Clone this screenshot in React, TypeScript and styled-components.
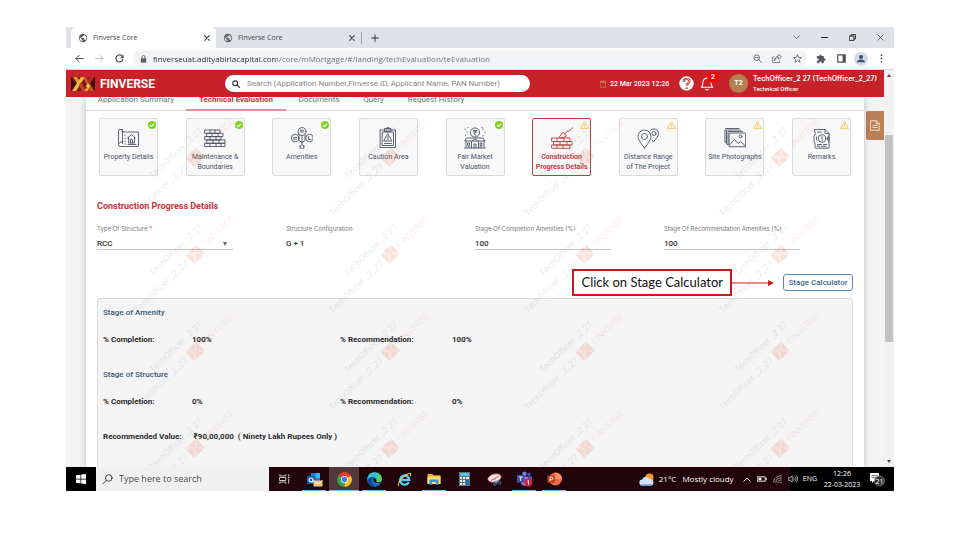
import React from "react";
import styled, { createGlobalStyle } from "styled-components";

const siteFont = `Roboto, "Liberation Sans", sans-serif`;
const uiFont = `"Open Sans", "Noto Sans", sans-serif`;

const GlobalStyle = createGlobalStyle`
  *, *::before, *::after { box-sizing: border-box; }
  body { margin: 0; background: #fff; font-family: ${siteFont}; }
  button, input, select { font: inherit; color: inherit; margin: 0; padding: 0; border: 0; background: none; outline: none; }
  a { color: inherit; text-decoration: none; }
  svg { display: block; flex: none; }
  h2, h3, dl, dd, dt, p { margin: 0; }
`;

/* ---------- window ---------- */

const Slide = styled.main`
  display: flex;
  min-height: 100vh;
  padding: 27px 66px 49px;
`;
const Screen = styled.div`
  display: flex;
  flex-direction: column;
  flex: 1;
  min-width: 0;
`;
const IconButton = styled.button<{ $w?: number }>`
  display: flex;
  align-items: center;
  justify-content: center;
  width: ${(p) => p.$w ?? 20}px;
  height: 16px;
  flex: none;
`;
const TabStrip = styled.div`
  display: flex;
  align-items: flex-end;
  height: 21px;
  padding-left: 5px;
  background: #dee1e6;
  font: 7px/20px ${uiFont};
  color: #45494d;
`;
const BrowserTab = styled.div<{ $active?: boolean }>`
  display: flex;
  align-items: center;
  gap: 5px;
  width: 145px;
  height: 21px;
  padding: 0 3px 0 7px;
  border-radius: 5px 5px 0 0;
  background: ${(p) => (p.$active ? "#fff" : "transparent")};
`;
const TabTitle = styled.span`
  flex: 1;
  white-space: nowrap;
`;
const NewTab = styled.div`
  display: flex;
  align-items: center;
  height: 21px;
  &::before { content: ""; width: 1px; height: 12px; background: #9a9fa5; }
`;
const WindowButtons = styled.div`
  display: flex;
  gap: 8px;
  height: 19px;
  margin-left: auto;
  padding-right: 4px;
`;
const Toolbar = styled.div`
  display: flex;
  align-items: center;
  height: 22px;
  padding: 0 3px;
  border-bottom: 1px solid #d5d7da;
  background: #fff;
`;
const AddressBar = styled.div`
  display: flex;
  align-items: center;
  flex: 1;
  height: 17px;
  margin: 0 4px;
  padding-left: 7px;
  border-radius: 9px;
  background: #f1f3f4;
`;
const AddressInput = styled.input`
  flex: 1;
  min-width: 0;
  margin-left: 6px;
  font: 8px/16px ${uiFont};
  color: transparent;
  background: linear-gradient(90deg, #26292c 124px, #6b6f74 124px);
  background-clip: text;
  -webkit-background-clip: text;
`;

/* ---------- site ---------- */

const PageArea = styled.div`
  display: flex;
  flex: 1;
`;
const Site = styled.div`
  display: flex;
  flex-direction: column;
  flex: 1;
  min-width: 0;
`;
const SiteHeader = styled.header`
  display: flex;
  align-items: center;
  height: 27px;
  padding: 0 5px;
  background: #c7222a;
  color: #fff;
`;
const Brand = styled.a`
  display: flex;
  align-items: center;
  gap: 5px;
  width: 154px;
  font: 700 12px/16px ${siteFont};
`;
const SearchBox = styled.label`
  display: flex;
  align-items: center;
  gap: 7px;
  flex: 0 1 305px;
  height: 17px;
  padding: 0 7px;
  border-radius: 9px;
  background: #fff;
  input {
    flex: 1;
    min-width: 0;
    font-size: 8px;
    line-height: 16px;
    color: #555;
  }
  input::placeholder { color: #858585; opacity: 1; }
`;
const HeaderTools = styled.div`
  display: flex;
  align-items: center;
  margin-left: auto;
`;
const DateText = styled.time`
  width: 69px;
  margin-left: 4px;
  font: 500 7px/10px ${siteFont};
  white-space: nowrap;
`;
const HelpButton = styled(IconButton)`
  width: 15px;
`;
const BellButton = styled.button`
  position: relative;
  width: 18px;
  margin: 0 11px 0 6px;
  display: flex;
`;
const Badge = styled.span`
  position: absolute;
  top: -5px;
  right: -1px;
  width: 12px;
  height: 12px;
  border-radius: 50%;
  background: #f00;
  font: 700 7px/12px ${siteFont};
  text-align: center;
`;
const Avatar = styled.span`
  width: 19px;
  height: 19px;
  border-radius: 50%;
  background: #b5804f;
  font: 700 7px/19px ${siteFont};
  text-align: center;
`;
const UserBlock = styled.div`
  width: 126px;
  margin-left: 5px;
  font: 600 7px/10px Inter, ${siteFont};
  white-space: nowrap;
  small { display: block; font: 500 6px/10px ${siteFont}; }
`;
const Body = styled.div`
  position: relative;
  display: flex;
  flex: 1;
  background: #f4f4f4;
  padding-left: 20px;
`;
const Sheet = styled.section`
  display: flex;
  flex-direction: column;
  flex: 1;
  min-width: 0;
  background: #fff;
  box-shadow: 0 0 7px rgba(0, 0, 0, 0.22);
  clip-path: inset(0 -8px);
`;
const SideRail = styled.aside`
  display: flex;
  width: 20px;
  padding: 14px 0 0 2px;
`;
const NotesTab = styled.button`
  display: flex;
  align-items: center;
  justify-content: center;
  width: 18px;
  height: 29px;
  border-radius: 2px 0 0 2px;
  background: #bb8059;
`;
const Nav = styled.nav`
  display: flex;
  border-bottom: 1px solid #dcdcdc;
`;
const NavLink = styled.a<{ $active?: boolean; $w: number }>`
  width: ${(p) => p.$w}px;
  padding-bottom: 7px;
  border-bottom: 2px solid ${(p) => (p.$active ? "#e29297" : "transparent")};
  margin-bottom: -1px;
  font: ${(p) => (p.$active ? 700 : 400)} 8px/5px ${siteFont};
  color: ${(p) => (p.$active ? "#c8323a" : "#707070")};
  text-align: center;
  white-space: nowrap;
`;
const Content = styled.div`
  display: flex;
  flex-direction: column;
  flex: 1;
  padding: 7px 11px 0;
`;
const Cards = styled.div`
  display: flex;
  justify-content: space-between;
  padding: 0 2px;
`;
const Card = styled.button<{ $active?: boolean }>`
  position: relative;
  display: flex;
  flex-direction: column;
  align-items: center;
  width: 59px;
  height: 58px;
  padding-top: 8px;
  border: 1px solid ${(p) => (p.$active ? "#b5413c" : "#dadada")};
  border-radius: 2px;
  background: #f8f8f8;
  color: ${(p) => (p.$active ? "#b8423c" : "#4b5368")};
  font: ${(p) => (p.$active ? 700 : 400)} 7px/10px ${siteFont};
  white-space: pre;
  svg + span { margin-top: 3px; }
`;
const Status = styled.span`
  position: absolute;
  top: 2px;
  right: 1px;
`;
const SectionTitle = styled.h2`
  margin-top: 24px;
  font: 700 9px/12px ${siteFont};
  color: #c8323a;
`;
const Fields = styled.form`
  display: grid;
  grid-template-columns: repeat(4, 1fr);
  margin-top: 12px;
`;
const Field = styled.label<{ $line?: boolean }>`
  position: relative;
  display: flex;
  flex-direction: column;
  width: 136px;
  font: 400 6px/10px Inter, ${siteFont};
  color: #777;
  white-space: nowrap;
  em { color: #d33; font-style: normal; }
  input, select {
    appearance: none;
    height: 16px;
    padding-top: 4px;
    border-bottom: 1px solid ${(p) => (p.$line ? "#c4c4c4" : "transparent")};
    font: 500 8px/10px ${siteFont};
    color: #333;
  }
`;
const Caret = styled.span`
  position: absolute;
  right: 6px;
  bottom: 4px;
  border: 2px solid transparent;
  border-top: 4px solid #666;
  border-bottom: 0;
`;
const Actions = styled.div`
  position: relative;
  z-index: 2;
  display: flex;
  align-items: center;
  justify-content: flex-end;
  margin-top: 19px;
`;
const Callout = styled.p`
  padding: 0 7px;
  border: 2px solid #c61a1f;
  background: #fff;
  font: 400 13px/23px Lato, sans-serif;
  color: #111;
  white-space: nowrap;
`;
const StageButton = styled.button`
  width: 70px;
  height: 17px;
  margin-left: 9px;
  border: 1px solid #5b87b5;
  border-radius: 3px;
  background: #fff;
  font: 500 8px/14px ${siteFont};
  color: #41658f;
  white-space: nowrap;
`;
const Summary = styled.section`
  flex: 1;
  margin-top: 2px;
  padding: 8px 5px 12px;
  border: 1px solid #dcdcdc;
  border-bottom: 0;
  border-radius: 3px 3px 0 0;
  background: #f4f4f4;
  color: #2b2b2b;
`;
const SummaryTitle = styled.h3`
  font: 500 8px/12px ${siteFont};
  color: #34567a;
`;
const Row = styled.dl`
  display: grid;
  grid-template-columns: 89px 148px 112px 1fr;
  margin: 15px 0 23px;
  font: 700 8px/12px ${siteFont};
`;
const ValueRow = styled.dl`
  display: flex;
  gap: 12px;
  margin-top: 23px;
  font: 700 8px/12px ${siteFont};
  white-space: pre;
`;

/* ---------- watermark ---------- */

const Watermarks = styled.div`
  position: absolute;
  inset: 0;
  display: grid;
  grid-template-columns: repeat(4, 195px);
  grid-auto-rows: 97px;
  padding: 91px 0 0 75px;
  overflow: hidden;
  pointer-events: none;
`;
const Mark = styled.div`
  width: max-content;
  height: 32px;
  transform: rotate(-44deg);
  transform-origin: left bottom;
  font: 400 9px/16px ${siteFont};
  color: rgba(80, 110, 170, 0.16);
  white-space: nowrap;
  p:first-child { padding-left: 37px; }
  p:last-child { display: flex; align-items: center; gap: 4px; }
  b { font-weight: 400; color: rgba(220, 70, 50, 0.11); }
`;

/* ---------- scrollbar ---------- */

const ScrollTrack = styled.div`
  display: flex;
  flex-direction: column;
  align-items: center;
  width: 10px;
  padding: 4px 0;
  background: #f1f1f1;
`;
const Thumb = styled.div`
  width: 8px;
  height: 207px;
  margin: 58px 0 auto;
  background: #c1c1c1;
`;
const Arrow = styled.span<{ $up?: boolean }>`
  border: 2px solid transparent;
  border-top: ${(p) => (p.$up ? "0" : "3px solid #505050")};
  border-bottom: ${(p) => (p.$up ? "3px solid #505050" : "0")};
`;

/* ---------- taskbar ---------- */

const Taskbar = styled.footer`
  display: flex;
  height: 24px;
  background: linear-gradient(270deg, #000 104px, #22050a 104px);
  color: #fff;
  font: 8px/12px ${uiFont};
`;
const StartButton = styled.button`
  display: flex;
  align-items: center;
  justify-content: center;
  width: 30px;
  background: #000;
`;
const TaskSearch = styled.label`
  display: flex;
  align-items: center;
  gap: 6px;
  width: 173px;
  padding-left: 6px;
  background: #f0f0f0;
  input { flex: 1; min-width: 0; font: 9px/16px ${uiFont}; }
  input::placeholder { color: #4a4a4a; opacity: 1; }
`;
const AppButton = styled.button<{ $open?: boolean; $active?: boolean }>`
  display: flex;
  align-items: center;
  justify-content: center;
  width: 30px;
  background: ${(p) => (p.$active ? "#52383d" : "none")};
  box-shadow: ${(p) => (p.$active ? "inset 0 -1px #7cb8ea" : "none")};
  ${(p) => p.$open && `
    background: linear-gradient(#7cb8ea, #7cb8ea) center bottom / 24px 1px no-repeat;
  `}
`;
const Tray = styled.div`
  display: flex;
  align-items: center;
  margin-left: auto;
  padding-right: 9px;
  white-space: nowrap;
`;
const Weather = styled.span`
  display: flex;
  gap: 6px;
  width: 84px;
  margin-left: 5px;
  font-size: 8px;
`;
const TrayIcons = styled.div`
  display: flex;
  align-items: center;
  gap: 6px;
  width: 60px;
`;
const Clock = styled.time`
  width: 50px;
  font: 7px/11px ${uiFont};
  text-align: center;
  white-space: pre-line;
`;
const Language = styled.span`
  font-size: 7px;
`;
const Notices = styled.button`
  margin-left: 2px;
`;

/* ---------- drawings ---------- */

const Line = (p: React.SVGProps<SVGSVGElement>) => (
  <svg fill="none" stroke="currentColor" strokeWidth="1" strokeLinecap="round" strokeLinejoin="round" aria-hidden="true" {...p} />
);

const Globe = () => (
  <svg width="10" height="10" viewBox="0 0 24 24" aria-hidden="true">
    <path fill="#5a5f64" d="M12 2a10 10 0 1 0 0 20 10 10 0 0 0 0-20zm-1 17.9A8 8 0 0 1 4.200 10.200L9 15v1c0 1.100.9 2 2 2zm6.900-2.500A2 2 0 0 0 16 16h-1v-3a1 1 0 0 0-1-1H8v-2h2a1 1 0 0 0 1-1V7h2a2 2 0 0 0 2-2v-.4a8 8 0 0 1 2.900 12.800z" />
  </svg>
);
const Cross = ({ size = 6, w = 1 }: { size?: number; w?: number }) => (
  <Line width={size} height={size} viewBox="0 0 6 6" stroke="#44484c" strokeWidth={w}><path d="M.7.7l4.600 4.600M5.300.7L.7 5.300" /></Line>
);

const Logo = () => (
  <svg width="24" height="14" viewBox="0 0 24 14" aria-hidden="true">
    <path fill="#7c1a1c" d="M0 0h24v14H0z" />
    <path fill="#3f1012" d="M0 0l5 7-5 7zM24 0l-5 7 5 7z" />
    <path fill="#e5942f" d="M2 0h4l4 6-2 3z" />
    <path fill="#f2bd45" d="M10 0h4L5 14H1z" />
    <path fill="#c93c20" d="M8 8l2-3 5 9h-4z" />
    <path fill="#d9581f" d="M12 0h3l8 14h-4z" />
    <path fill="#f5cd55" d="M15 9l2-3 2 3-2 3z" />
    <path fill="#b62a20" d="M19 0h4l-5 7-2-3z" />
    <path fill="#e8a33a" d="M16 10l2 2-1 2h-4z" />
  </svg>
);

const MarkLogo = () => (
  <svg width="15" height="13" viewBox="0 0 15 13" aria-hidden="true">
    <path fill="rgba(225,90,50,.11)" d="M0 0h15v13H0z" />
    <path fill="rgba(225,80,40,.08)" d="M0 0l5 6-5 7zM5 0l3 6 4-6zM4 13l4-7 4 7zM15 1l-5 5 5 6z" />
  </svg>
);

const Tick = () => (
  <svg width="8" height="8" viewBox="0 0 8 8" aria-hidden="true">
    <circle cx="4" cy="4" r="4" fill="#7ed321" />
    <path d="M2.100 4.100l1.400 1.400 2.500-2.700" fill="none" stroke="#fff" strokeWidth="1.100" />
  </svg>
);
const Warn = () => (
  <svg width="9" height="8" viewBox="0 0 9 8" fill="none" stroke="#f9c14a" strokeWidth=".9" strokeLinejoin="round" aria-hidden="true">
    <path d="M4.500.8L8.400 7.400H.6zM4.500 3v2.200M4.500 5.800v.8" />
  </svg>
);

const cardIcons: Record<string, React.ReactNode> = {
  property: (
    <>
      <path d="M4 2.500h-2a1.500 1.500 0 0 0-1.500 1.500v13.500a2 2 0 0 0 2 2H20a.5.5 0 0 0 .5-.5V5H4.500zM4.500 3v13.500a1.500 1.500 0 0 0-3-.3" />
      <path d="M9.500 11l4-3.500 4 3.500M10.500 10.500V16h6v-5.500M12.500 16v-3.500h2V16M7 8v.5M7 11v.5M7 14v.5M7 17h.5M10 17.500h8" />
    </>
  ),
  wall: (
    <path d="M1 3h15v3.300H1zM6 3v3.300M11 3v3.300M3 6.300h16v3.300H3zM8 6.300v3.300M14 6.300v3.300M1 9.600h16v3.300H1zM6 9.600v3.300M12 9.600v3.300M3 12.900h18v3.400H3zM9 12.900v3.400M15 12.900v3.400M1 16.300h20v3.200H1zM6 16.300v3.200M12 16.300v3.200M17 16.300v3.200" />
  ),
  amenities: (
    <>
      <circle cx="11" cy="4.500" r="4" /><circle cx="4" cy="11" r="3.700" /><circle cx="18.500" cy="11" r="3.700" />
      <path d="M11 8.500V17M8 7.500v6l3 2 3-2v-6M9.300 5h3.400M9.300 3.300h3.400M2.500 10.500h3M2.500 12.200h3M17.500 9.500v3h2.500M8.500 19.500l2.500-2 2.500 2M9.300 19.300V22h3.400v-2.700" />
    </>
  ),
  caution: (
    <>
      <path d="M3.500 3h15v17.500h-15zM5.500 5h11v13.500h-11zM8 1.500h6v3H8zM10 .7h2" />
      <path d="M11 7l4 7H7zM11 9.500v2M11 12.700v.3M7.500 16.500h7" />
    </>
  ),
  market: (
    <>
      <circle cx="11" cy="5.500" r="4.600" />
      <path d="M9.300 3.500h3.400M9.300 5h3.400M10 3.500c2.500 0 2.500 3 0 3l2 2M1 2v.4M3 5v.4M1.500 8v.4M19 2v.4M21 5v.4M19 8.500v.4M4 .5v.3M18 .5v.3" />
      <path d="M3 11h16l2 3H1zM2 14v6.500M20 14v6.500M.5 21h21M7.500 21v-6.500L11 12l3.500 2.500V21M10 21v-4h2v4M4 16h1.500v2.500H4zM16.500 16H18v2.500h-1.500zM4 20h2M16 20h2" />
    </>
  ),
  construction: (
    <>
      <path d="M1 11h18v3.500H1zM6 11v3.500M13 11v3.500M3 14.500h18V18H3zM9 14.500V18M16 14.500V18M1 18h18v3.300H1zM6 18v3.300M12 18v3.300" />
      <path d="M8 10.500l4-5.500 3.500 4-3 1.500zM13.500 7l3-3M16.500 4l1 .5L21.500.8" />
    </>
  ),
  distance: (
    <>
      <path d="M7.500 21C3 15 1 12.500 1 9.500a6.500 6.500 0 0 1 13 0c0 3-2 5.500-6.500 11.500z" /><circle cx="7.500" cy="9.500" r="3" />
      <path d="M13 4a4.600 4.600 0 0 1 8.500 2.500c0 2.500-2 4.500-5 8.500l-1.500-2" /><circle cx="17" cy="6.500" r="2" />
    </>
  ),
  photos: (
    <>
      <path d="M5.500 6h15.500a.7.700 0 0 1 .7.700v13H5.500zM4 17.500V4.500h14.500M2.500 16V3h14M1 14.500V2.500a1 1 0 0 1 1-1h13M4 17.500H3L1 14.500" />
      <path d="M6 17.500l4.500-5 3.500 4 2.500-2 4.500 4" /><circle cx="16.500" cy="9.500" r="1.500" />
    </>
  ),
  remarks: (
    <>
      <path d="M4 2.500h10l4 4V20.500a.7.700 0 0 1-.7.700H4.700A.7.700 0 0 1 4 20.500V16l-1-1V9l1-1zM14 2.500v4h4M18 9v6" />
      <circle cx="11" cy="11.500" r="3.800" /><path d="M11 9.500v2.200M11 13.200v.3M6.500 5h4M6.500 17.500h4M12.500 17.500h3M6.500 19.300h2M10 19.300h5M5.500 10v3M16.500 10v3" />
    </>
  ),
};

/* ---------- data ---------- */

const cards = [
  { icon: "property", text: "Property Details", status: "done" },
  { icon: "wall", text: "Maintenance &\nBoundaries", status: "done" },
  { icon: "amenities", text: "Amenities", status: "done" },
  { icon: "caution", text: "Caution Area", status: "none" },
  { icon: "market", text: "Fair Market\nValuation", status: "done" },
  { icon: "construction", text: "Construction\nProgress Details", status: "warn", active: true },
  { icon: "distance", text: "Distance Range\nof The Project", status: "warn" },
  { icon: "photos", text: "Site Photographs", status: "warn" },
  { icon: "remarks", text: "Remarks", status: "warn" },
];

const navItems = [
  { text: "Application Summary", w: 100 },
  { text: "Technical Evaluation", w: 100, active: true },
  { text: "Documents", w: 66 },
  { text: "Query", w: 43 },
  { text: "Request History", w: 82 },
];

const stages = [
  { title: "Stage of Amenity", value: "100%" },
  { title: "Stage of Structure", value: "0%" },
];

/* ---------- parts ---------- */

function Browser() {
  return (
    <>
      <TabStrip>
        <BrowserTab $active>
          <Globe /><TabTitle>Finverse Core</TabTitle>
          <IconButton $w={12} aria-label="Close tab"><Cross w={1.2} /></IconButton>
        </BrowserTab>
        <BrowserTab>
          <Globe /><TabTitle>Finverse Core</TabTitle>
          <IconButton $w={12} aria-label="Close tab"><Cross w={1.2} /></IconButton>
        </BrowserTab>
        <NewTab>
          <IconButton $w={26} aria-label="New tab">
            <Line width="8" height="8" viewBox="0 0 8 8" stroke="#33373b"><path d="M4 .7v6.600M.7 4h6.600" /></Line>
          </IconButton>
        </NewTab>
        <WindowButtons>
          <IconButton aria-label="Search tabs"><Line width="7" height="5" viewBox="0 0 7 5" stroke="#555" strokeWidth=".8"><path d="M.7.8l2.800 2.800L6.300.8" /></Line></IconButton>
          <IconButton aria-label="Minimise"><Line width="7" height="3" viewBox="0 0 7 3" stroke="#222"><path d="M.5 1.500h6" /></Line></IconButton>
          <IconButton aria-label="Restore"><Line width="7" height="7" viewBox="0 0 7 7" stroke="#222" strokeWidth=".9"><path d="M.6 2h4.400v4.400H.6zM2 2V.6h4.400V5H5" /></Line></IconButton>
          <IconButton aria-label="Close window"><Cross size={7} w={0.7} /></IconButton>
        </WindowButtons>
      </TabStrip>
      <Toolbar>
        <IconButton aria-label="Back"><Line width="9" height="9" viewBox="0 0 9 9" stroke="#4d5256"><path d="M8.300 4.500H1M4.200 1.200L.9 4.500l3.300 3.300" /></Line></IconButton>
        <IconButton aria-label="Forward"><Line width="9" height="9" viewBox="0 0 9 9" stroke="#b5b8bc"><path d="M.7 4.500H8M4.800 1.200l3.300 3.300-3.300 3.300" /></Line></IconButton>
        <IconButton aria-label="Reload">
          <Line width="9" height="9" viewBox="0 0 9 9" stroke="#4d5256" strokeWidth="1.200"><path d="M7.800 5.300A3.500 3.500 0 1 1 7.100 2.200" /><path fill="#4d5256" stroke="none" d="M8.600.4v3.800H4.800z" /></Line>
        </IconButton>
        <AddressBar>
          <svg width="7" height="8" viewBox="0 0 7 8" aria-hidden="true"><path fill="#5f6368" d="M.8 3.200h5.400v4.500H.8z" /><path fill="none" stroke="#5f6368" strokeWidth=".9" d="M2 3.200V2a1.500 1.500 0 0 1 3 0v1.200" /></svg>
          <AddressInput aria-label="Address" defaultValue="finverseuat.adityabirlacapital.com/core/mMortgage/#/landing/techEvaluation/teEvaluation" />
          <IconButton aria-label="Zoom"><Line width="9" height="9" viewBox="0 0 9 9" stroke="#5f6368" strokeWidth=".9"><circle cx="3.700" cy="3.700" r="2.800" /><path d="M5.900 5.900l2.500 2.500M2.400 3.700H5" /></Line></IconButton>
          <IconButton aria-label="Share"><Line width="10" height="9" viewBox="0 0 10 9" stroke="#5f6368" strokeWidth=".8"><path d="M2 3H.7v5.500h7V6.800M2.700 6.500c.2-2 1.500-3 3.800-3.200V5.200L9.400 2.700 6.500.6v1.500C4 2.400 2.600 4 2.700 6.500z" /></Line></IconButton>
          <IconButton aria-label="Bookmark"><Line width="9" height="9" viewBox="0 0 24 24" stroke="#5f6368" strokeWidth="2.200"><path d="M12 2l3 7 7.500.6-5.700 5 1.700 7.400-6.500-4-6.500 4 1.700-7.400-5.700-5L9 9z" /></Line></IconButton>
        </AddressBar>
        <IconButton aria-label="Extensions"><svg width="10" height="10" viewBox="0 0 24 24"><path fill="#55595d" d="M20.500 11H19V7a2 2 0 0 0-2-2h-4V3.500a2.500 2.500 0 0 0-5 0V5H4a2 2 0 0 0-2 2v3.800h1.500a2.700 2.700 0 0 1 0 5.400H2V20c0 1.100.9 2 2 2h3.800v-1.500a2.700 2.700 0 0 1 5.400 0V22H17a2 2 0 0 0 2-2v-4h1.500a2.500 2.500 0 0 0 0-5z" /></svg></IconButton>
        <IconButton aria-label="Side panel"><svg width="9" height="9" viewBox="0 0 9 9"><path fill="none" stroke="#4d5256" strokeWidth="1.200" d="M.8.8h7.400v7.400H.8z" /><path fill="#4d5256" d="M5.500 1H8v7H5.500z" /></svg></IconButton>
        <IconButton aria-label="Profile"><svg width="14" height="14" viewBox="0 0 14 14"><circle cx="7" cy="7" r="7" fill="#d3daea" /><circle cx="7" cy="5" r="2" fill="#3f4e6b" /><path fill="#3f4e6b" d="M3 10.300c0-3.700 8-3.700 8 0z" /></svg></IconButton>
        <IconButton aria-label="Menu"><svg width="3" height="9" viewBox="0 0 3 9" fill="#4d5256"><circle cx="1.500" cy="1.200" r=".9" /><circle cx="1.500" cy="4.500" r=".9" /><circle cx="1.500" cy="7.800" r=".9" /></svg></IconButton>
      </Toolbar>
    </>
  );
}

function Header() {
  return (
    <SiteHeader>
      <Brand href="#"><Logo />FINVERSE</Brand>
      <SearchBox>
        <Line width="8" height="8" viewBox="0 0 8 8" stroke="#333" strokeWidth="1.200"><circle cx="3.200" cy="3.200" r="2.400" /><path d="M5 5l2.400 2.400" /></Line>
        <input aria-label="Search" placeholder="Search (Application Number,Finverse ID, Applicant Name, PAN Number)" />
      </SearchBox>
      <HeaderTools>
        <Line width="6" height="8" viewBox="0 0 6 8" stroke="#c98246" strokeWidth=".8"><path d="M.5 1.500h5v5.800h-5zM.5 2.700h5M1.700.6v1M4.300.6v1" /></Line>
        <DateText>22 Mar 2023 12:26</DateText>
        <HelpButton aria-label="Help">
          <svg width="15" height="15" viewBox="0 0 15 15"><circle cx="7.500" cy="7.500" r="7.200" fill="#fff" /><path d="M4.700 6c0-4.200 6-4 5.600-.4C10 7.700 7.600 7.700 7.600 9.800M7.600 11.400v1.300" fill="none" stroke="#c7222a" strokeWidth="2.200" /><path d="M4.700 6c0-4.200 6-4 5.600-.4C10 7.700 7.600 7.700 7.600 9.800" fill="none" stroke="#fff" strokeWidth=".7" /></svg>
        </HelpButton>
        <BellButton aria-label="Notifications">
          <Line width="14" height="15" viewBox="0 0 12 13" stroke="#fff" strokeWidth=".9"><path d="M1 9.800c1.500-1 1.500-2.300 1.500-4.300a3.500 3.500 0 0 1 7 0c0 2 0 3.300 1.500 4.300zM4.800 11.500c.5.800 1.900.8 2.400 0M6 2V.8" /></Line>
          <Badge>2</Badge>
        </BellButton>
        <Avatar>T2</Avatar>
        <UserBlock>TechOfficer_2 27 (TechOfficer_2_27)<small>Technical Officer</small></UserBlock>
      </HeaderTools>
    </SiteHeader>
  );
}

function Evaluation() {
  return (
    <Body>
      <Sheet>
        <Nav>
          {navItems.map((n) => <NavLink key={n.text} href="#" $w={n.w} $active={n.active}>{n.text}</NavLink>)}
        </Nav>
        <Content>
          <Cards>
            {cards.map((c) => (
              <Card key={c.icon} $active={c.active}>
                <Line width="22" height="22" viewBox="0 0 22 22" strokeWidth=".9">{cardIcons[c.icon]}</Line>
                <span>{c.text}</span>
                {c.status !== "none" && <Status>{c.status === "done" ? <Tick /> : <Warn />}</Status>}
              </Card>
            ))}
          </Cards>
          <SectionTitle>Construction Progress Details</SectionTitle>
          <Fields>
            <Field $line>
              <span>Type Of Structure <em>*</em></span>
              <select defaultValue="RCC"><option>RCC</option></select>
              <Caret />
            </Field>
            <Field>Structure Configuration<input readOnly value="G + 1" /></Field>
            <Field $line>Stage Of Completion Amenities (%)<input defaultValue="100" /></Field>
            <Field $line>Stage Of Recommendation Amenities (%)<input defaultValue="100" /></Field>
          </Fields>
          <Actions>
            <Callout>Click on Stage Calculator</Callout>
            <svg width="42" height="6" viewBox="0 0 42 6" aria-hidden="true"><path d="M0 3h37" stroke="#c61a1f" /><path d="M36 0l6 3-6 3z" fill="#c61a1f" /></svg>
            <StageButton>Stage Calculator</StageButton>
          </Actions>
          <Summary>
            {stages.map((s) => (
              <React.Fragment key={s.title}>
                <SummaryTitle>{s.title}</SummaryTitle>
                <Row>
                  <dt>% Completion:</dt><dd>{s.value}</dd>
                  <dt>% Recommendation:</dt><dd>{s.value}</dd>
                </Row>
              </React.Fragment>
            ))}
            <ValueRow><dt>Recommended Value:</dt><dd>{"₹90,00,000  ( Ninety Lakh Rupees Only )"}</dd></ValueRow>
          </Summary>
        </Content>
      </Sheet>
      <SideRail>
        <NotesTab aria-label="Notes">
          <Line width="10" height="11" viewBox="0 0 10 11" stroke="#f5e6da" strokeWidth=".9"><path d="M.8.8h5.700l2.700 2.500v6.900H.8zM6.300.8v2.700h2.800M2.800 5.500h4.400M2.800 7.500h4.400" /></Line>
        </NotesTab>
      </SideRail>
      <Watermarks aria-hidden="true">
        {Array.from({ length: 16 }, (_, i) => (
          <div key={i}>
            <Mark>
              <p>TechOfficer _2 27</p>
              <p>TechOfficer _2_27<MarkLogo /><b>FINVERSE</b></p>
            </Mark>
          </div>
        ))}
      </Watermarks>
    </Body>
  );
}

function WindowsTaskbar() {
  return (
    <Taskbar>
      <StartButton aria-label="Start"><svg width="10" height="10" viewBox="0 0 10 10" fill="#fff"><path d="M0 1.300L4.500.7v4H0zM5.200.6L10 0v4.700H5.200zM0 5.400h4.500v4L0 8.800zM5.200 5.400H10V10l-4.800-.6z" /></svg></StartButton>
      <TaskSearch>
        <Line width="11" height="11" viewBox="0 0 11 11" stroke="#333" strokeWidth=".9"><circle cx="6.800" cy="4" r="3.300" /><path d="M4.300 6.400L.8 9.900" /></Line>
        <input aria-label="Taskbar search" placeholder="Type here to search" />
      </TaskSearch>
      <AppButton aria-label="Task view"><Line width="11" height="10" viewBox="0 0 11 10" stroke="#ddd" strokeWidth=".9"><path d="M.8.7v1.200h6V.7M.8 9.300V8.100h6v1.200M.8 3.500h6v3h-6zM9.700.7v1.500M9.700 5v4.300M9.200 3.500h1" /></Line></AppButton>
      <AppButton $open aria-label="Outlook">
        <svg width="17" height="15" viewBox="0 0 17 15"><path fill="#1a78cf" d="M5 1h9v10H5z" /><path fill="#35b8f1" d="M9.500 1H14v5H9.500z" /><path fill="#0b5cad" d="M1 4h8v8H1z" /><circle cx="5" cy="8" r="2" fill="none" stroke="#fff" strokeWidth="1.200" /><path fill="#f6c27a" d="M7.500 8.500H16.500V14.500H7.500z" /><path d="M7.500 8.500l4.500 3.300 4.500-3.300" fill="none" stroke="#fff" strokeWidth=".8" /></svg>
      </AppButton>
      <AppButton $active aria-label="Chrome">
        <svg width="15" height="15" viewBox="0 0 15 15"><path fill="#e63b2e" d="M7.500 7.500L1.200 3.700a7.300 7.300 0 0 1 12.600 0z" /><path fill="#fbc116" d="M7.500 7.500l6.300-3.800a7.300 7.300 0 0 1-6.500 11.100z" /><path fill="#2da94f" d="M7.500 7.500l-.2 7.300A7.300 7.300 0 0 1 1.200 3.700z" /><circle cx="7.500" cy="7.500" r="3.500" fill="#fff" /><circle cx="7.500" cy="7.500" r="2.700" fill="#3b7ded" /></svg>
      </AppButton>
      <AppButton $open aria-label="Edge">
        <svg width="15" height="15" viewBox="0 0 15 15"><circle cx="7.500" cy="7.500" r="7.300" fill="#1476c8" /><path fill="#35c1d8" d="M.5 6A7.300 7.300 0 0 1 7.500.2c4.500 0 7.300 3.300 7.300 6.500 0 2-1.500 3.300-3.500 3.300-1.800 0-2.500-.6-2-1.400C10 7 9 5 6.500 5 4 5 2 5.500.5 8z" /><path fill="#63d34c" d="M10 .7a7.200 7.200 0 0 1 4.800 6c0 2-1.500 3.300-3.500 3.300-1.800 0-2.500-.6-2-1.400C11 6 11 3 10 .7z" /><path fill="#0c4a96" d="M6.500 5C3.500 7 4 12.500 9 14.700 5 15 1 12 .5 8 2 5.500 4 5 6.500 5z" /><path fill="#22050a" d="M6.500 6.300c-1 3 1.500 5.200 6.300 4.700l1.200-.7c-2.700.4-5 0-4.700-1.700C9.500 7.500 8 6 6.500 6.300z" /></svg>
      </AppButton>
      <AppButton aria-label="Internet Explorer">
        <svg width="15" height="15" viewBox="0 0 15 15" fill="none"><path d="M11.800 10.200A4.600 4.600 0 1 1 12.300 8H4.500" stroke="#5cc8f5" strokeWidth="2.300" /><path d="M2 13.800c-2-1 1-6 4.500-9S13.300.4 13.700 1.800c.2.700 0 1.500-.6 2.500" stroke="#f6c63c" strokeWidth="1.100" /></svg>
      </AppButton>
      <AppButton $open aria-label="File Explorer">
        <svg width="14" height="12" viewBox="0 0 14 12"><path fill="#e9ab2d" d="M.5 1h5l1 1.200h7V11H.5z" /><path fill="#fbdc74" d="M.5 3.500h13V11H.5z" /><path fill="#3d94dc" d="M2.500 11.800V7.500c0-.5.400-1 1-1h7c.6 0 1 .5 1 1v4.300H9V9H5v2.800z" /></svg>
      </AppButton>
      <AppButton aria-label="Calculator">
        <svg width="11" height="14" viewBox="0 0 11 14"><path fill="#68737c" d="M0 0h11v14H0z" /><path fill="#4fc3f0" d="M1 1h9v3H1z" /><path fill="#e6ebef" d="M1 5h2v2H1zM4 5h2v2H4zM7 5h3v2H7zM1 8h2v2H1zM4 8h2v2H4zM1 11h2v2H1zM4 11h2v2H4z" /><path fill="#1b6fb8" d="M7 8h3v5H7z" /></svg>
      </AppButton>
      <AppButton aria-label="Snipping Tool">
        <svg width="15" height="13" viewBox="0 0 15 13"><ellipse cx="7.500" cy="5" rx="6.700" ry="3.900" fill="#f4eeee" stroke="#c9555a" strokeWidth=".8" transform="rotate(-15 7.500 5)" /><path d="M4 7.500L12 3" stroke="#d04a50" strokeWidth="1" /><path d="M8 6l2.500 4M12 6.500L8.500 10" stroke="#9ab" strokeWidth=".9" /><circle cx="8" cy="11" r="1.300" fill="none" stroke="#2a8bd0" strokeWidth=".9" /><circle cx="12.500" cy="9.500" r="1.300" fill="none" stroke="#2a8bd0" strokeWidth=".9" /></svg>
      </AppButton>
      <AppButton $open aria-label="Teams">
        <svg width="17" height="16" viewBox="0 0 17 16"><circle cx="8.500" cy="2.700" r="2.200" fill="#7b83eb" /><circle cx="13" cy="3.300" r="1.600" fill="#5059c9" /><path fill="#7b83eb" d="M5 5.500h7.500V11a3.700 3.700 0 0 1-7.500 0z" /><path fill="#5059c9" d="M12.500 5.500H16V10a2.500 2.500 0 0 1-3.500 1z" /><path fill="#4048a8" d="M1 4h7.500v7.500H1z" /><path d="M2.800 6h4M4.800 6v4" stroke="#fff" strokeWidth="1" /><circle cx="12.300" cy="11.500" r="4" fill="#d7213b" /><path d="M11.300 10.300l1.200-.9v4.300" fill="none" stroke="#fff" strokeWidth=".9" /></svg>
      </AppButton>
      <AppButton $open aria-label="PowerPoint">
        <svg width="15" height="14" viewBox="0 0 15 14"><circle cx="8.500" cy="7" r="6.500" fill="#ed6c47" /><path fill="#ff8f6b" d="M8.500.5A6.500 6.500 0 0 1 15 7H8.500z" /><path fill="#c43e1c" d="M.5 3.500h7.300v7.300H.5z" /><path d="M3 9.300V5.200h1.500a1.200 1.200 0 0 1 0 2.500H3" fill="none" stroke="#fff" strokeWidth=".9" /></svg>
      </AppButton>
      <Tray>
        <svg width="15" height="13" viewBox="0 0 15 13"><circle cx="10.500" cy="4.500" r="4" fill="#f59b2d" /><path fill="#cfe0f7" d="M3.500 12.500a3 3 0 0 1-.3-6A4 4 0 0 1 10.500 6a3.300 3.300 0 0 1 1.300 6.500z" /><path fill="#8db5ec" d="M1 11c1 1.300 2 1.500 3 1.500h8c1 0 2-.6 2.500-1.500z" /></svg>
        <Weather><span>21°C</span><span>Mostly cloudy</span></Weather>
        <TrayIcons>
          <Line width="8" height="5" viewBox="0 0 8 5" strokeWidth=".9"><path d="M.8 4.200L4 1l3.200 3.200" /></Line>
          <Line width="10" height="6" viewBox="0 0 10 6" strokeWidth=".9"><path d="M.6.800h7.600v4.400H.6zM9.300 2.200v1.600" /><path fill="#fff" stroke="none" d="M1.500 1.700h3v2.600h-3z" /></Line>
          <Line width="9" height="8" viewBox="0 0 9 8" stroke="#bbb" strokeWidth=".8"><path d="M.7 7.300C.7 3.500 4 .7 8.300.7M2.800 7.300c0-2.600 2.300-4.500 5.500-4.500M5 7.300c0-1.400 1.300-2.400 3.300-2.400M7 7.300h1.300" /></Line>
          <Line width="10" height="8" viewBox="0 0 10 8" stroke="#ccc" strokeWidth=".8"><path d="M.6 2.800h1.500L4.200.8v6.400L2.100 5.200H.6zM5.700 2.800c.6.800.6 1.600 0 2.400M7.200 1.800c1.200 1.400 1.200 3 0 4.400M8.600.8c1.300 2 1.300 4.400 0 6.400" /></Line>
        </TrayIcons>
        <Language>ENG</Language>
        <Clock>{"12:26\n22-03-2023"}</Clock>
        <Notices aria-label="Notifications: 21">
          <svg width="16" height="15" viewBox="0 0 16 15"><path fill="#fff" d="M1 1h9v8H5l-2 2V9H1z" /><path d="M2.500 3.500h6M2.500 5.500h6" stroke="#333" strokeWidth=".7" /><circle cx="10.500" cy="9" r="5" fill="#333" stroke="#999" strokeWidth=".7" /><text x="10.500" y="11.500" fontSize="7" textAnchor="middle" fill="#fff" fontFamily="Open Sans, sans-serif">21</text></svg>
        </Notices>
      </Tray>
    </Taskbar>
  );
}

export default function App() {
  return (
    <>
      <GlobalStyle />
      <Slide>
        <Screen>
          <Browser />
          <PageArea>
            <Site>
              <Header />
              <Evaluation />
            </Site>
            <ScrollTrack><Arrow $up /><Thumb /><Arrow /></ScrollTrack>
          </PageArea>
          <WindowsTaskbar />
        </Screen>
      </Slide>
    </>
  );
}
